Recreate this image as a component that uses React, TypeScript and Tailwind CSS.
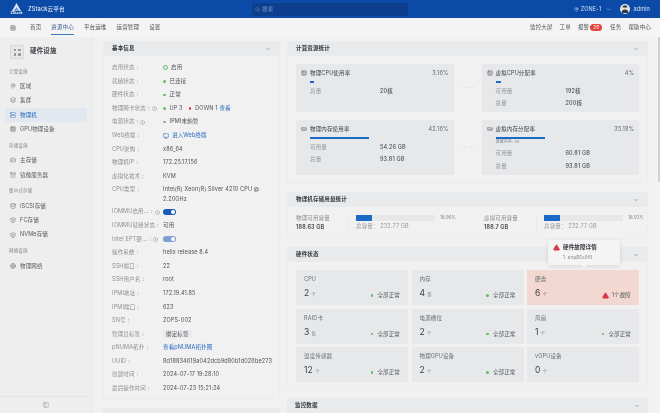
import { AlertTriangle, ChevronDown, Cpu, Grid3x3, HardDrive, Info, MapPin, MemoryStick, Monitor, Search, Server, Layers, Database, PanelLeft, Box, Archive, Globe } from "lucide-react";
import type { ReactNode } from "react";

const font = { fontFamily: '"Inter","Noto Sans CJK SC",sans-serif' };

const groups = [
  { title: "计算设施", items: [["区域", MapPin], ["集群", Layers], ["物理机", Server], ["GPU物理设备", Cpu]] },
  { title: "存储设施", items: [["主存储", HardDrive], ["镜像服务器", Archive]] },
  { title: "集中式存储", items: [["iSCSI存储", Database], ["FC存储", Box], ["NVMe存储", Box]] },
  { title: "网络设施", items: [["物理网络", Globe]] },
] as const;

function Sidebar() {
  return (
    <aside className="flex w-[93px] shrink-0 flex-col border-r border-[#e6e7e7] bg-[#eeeeee]">
      <div className="flex h-[28px] shrink-0 items-center gap-[6px] pl-[10px] pt-[2px]">
        <div className="grid h-[14px] w-[14px] grid-cols-2 gap-[2px] border border-[#d9dadc] bg-[#e6e7e8] p-[2.5px]">
          <span className="bg-[#9a9da1]" /><span className="bg-[#9a9da1]" /><span className="bg-[#9a9da1]" /><span className="bg-[#9a9da1]" />
        </div>
        <span className="text-[6.5px] font-semibold text-[#3a3e44]">硬件设施</span>
      </div>
      <div className="flex-1">
        {groups.map((g) => (
          <div key={g.title} className="mb-[3px]">
            <div className="flex h-[14px] items-center pl-[9px] text-[4.5px] text-[#85888d]">{g.title}</div>
            {g.items.map(([name, Icon]) => (
              <div
                key={name}
                className={`mx-[5px] flex h-[14.3px] items-center gap-[4px] rounded-[2px] pl-[5px] text-[5.5px] ${name === "物理机" ? "bg-[#e1e8f0] text-[#2467bd]" : "text-[#55595f]"}`}
              >
                <Icon size={6} strokeWidth={1.5} />
                <span>{name}</span>
              </div>
            ))}
          </div>
        ))}
      </div>
      <div className="flex h-[17px] shrink-0 items-center justify-center border-t border-[#e4e5e5] text-[#777a7f]">
        <PanelLeft size={6} strokeWidth={1.5} />
      </div>
    </aside>
  );
}

function CardHead({ title }: { title: string }) {
  return (
    <div className="flex h-[15px] shrink-0 items-center justify-between bg-[#e9eaeb] pl-[8px] pr-[8px] text-[5.5px] font-semibold text-[#33373d]">
      <span>{title}</span>
      <ChevronDown size={6} className="text-[#6a6e73]" />
    </div>
  );
}

function Dot({ c }: { c: string }) {
  return <span className={`mr-[4px] inline-block h-[2.5px] w-[2.5px] rounded-full ${c}`} />;
}

function Toggle({ light }: { light?: boolean }) {
  return (
    <span className={`flex h-[6px] w-[13px] items-center justify-end rounded-full pr-[1px] ${light ? "bg-[#7d9fd2]" : "bg-[#1a5bb5]"}`}>
      <span className="h-[4px] w-[4px] rounded-full bg-white" />
    </span>
  );
}

const link = "text-[#2467bd]";

const rows: [string, ReactNode, boolean?][] = [
  ["启用状态", <span className="flex items-center"><span className="mr-[3px] inline-block h-[5px] w-[5px] rounded-full border-[1.5px] border-[#5cb85c]" />启用</span>],
  ["就绪状态", <span className="flex items-center"><Dot c="bg-[#62b866]" />已连接</span>],
  ["硬件状态", <span className="flex items-center"><Dot c="bg-[#62b866]" />正常</span>],
  ["物理网卡状态", <span className="flex items-center"><Dot c="bg-[#62b866]" />UP 3<span className="ml-[6px] flex items-center"><Dot c="bg-[#d9364a]" /></span>DOWN 1<span className={`ml-[2px] ${link}`}>查看</span></span>, true],
  ["电源状态", <span className="flex items-center"><Dot c="bg-[#9a9da1]" />IPMI未纳管</span>, true],
  ["Web终端", <span className={`flex items-center gap-[3px] ${link}`}><Monitor size={6} />进入Web终端</span>],
  ["CPU架构", "x86_64"],
  ["物理机IP", "172.25.17.156"],
  ["虚拟化技术", "KVM"],
  ["CPU类型", <span className="block w-[100px] pt-[2px] leading-[9.5px]">Intel(R) Xeon(R) Silver 4210 CPU @ 2.20GHz</span>],
  ["IOMMU启用...", <span className="flex h-[13.6px] items-center"><Toggle /></span>, true],
  ["IOMMU就绪状态", "可用"],
  ["Intel EPT硬...", <span className="flex h-[13.6px] items-center"><Toggle light /></span>, true],
  ["操作系统", "helix release 8.4"],
  ["SSH端口", "22"],
  ["SSH用户名", "root"],
  ["IPMI地址", "172.19.41.85"],
  ["IPMI端口", "623"],
  ["SN号", "ZOPS-002"],
  ["管理员标签", <span className="bg-[#eaebec] px-[3px] py-[1px]">绑定标签</span>],
  ["pNUMA拓扑", <span className={link}>查看pNUMA拓扑图</span>],
  ["UUID", "8d18834619a042dcb9d80b1d026be273"],
  ["创建时间", "2024-07-17 19:28:10"],
  ["最后操作时间", "2024-07-23 15:21:24"],
];

function BasicInfo() {
  return (
    <div className="flex w-[177px] shrink-0 flex-col gap-[8px]">
      <section className="flex h-[359px] shrink-0 flex-col border-x border-b border-[#ecedEd] bg-[#f1f1f1]">
        <CardHead title="基本信息" />
        <div className="pl-[8px] pt-[5px]">
          {rows.map(([k, v, info]) => (
            <div key={k} className={`flex text-[5.5px] leading-[13.6px] ${k === "CPU类型" ? "h-[22px]" : "h-[13.6px]"}`}>
              <div className="flex h-[13.6px] w-[51px] shrink-0 items-center text-[#8b8e93]">
                <span className="whitespace-nowrap">{k}</span>
                <span className="ml-[2px]">:</span>
                {info ? <Info size={5} className="ml-[2px]" /> : null}
              </div>
              <div className="text-[#4c5056]">{v}</div>
            </div>
          ))}
        </div>
      </section>
      <section className="h-[15px] shrink-0 bg-[#e9eaeb]" />
    </div>
  );
}

function ResourceTile({ icon, title, pct, bar, note, lines }: { icon: ReactNode; title: string; pct: string; bar: number; note?: string; lines: [string, string][] }) {
  return (
    <div className="flex-1 bg-[#e7e8ea] px-[5px] py-[5px]">
      <div className="flex h-[8px] items-center justify-between text-[5.5px] text-[#3a3e44]">
        <span className="flex items-center gap-[3px]"><span className="text-[#5a5e63]">{icon}</span>{title}</span>
        <span className="text-[#63676c]">{pct}</span>
      </div>
      <div className="mt-[4px] pl-[9px]">
        <div className="h-[1.5px] bg-[#1c69c7]" style={{ width: bar }} />
        {note ? <div className="h-[6px] text-[4px] leading-[6px] text-[#7b7e83]">{note}</div> : null}
        <div className={note ? "mt-[2.5px]" : "mt-[2px]"}>
          {lines.map(([a, b]) => (
            <div key={a} className="flex h-[12.5px] items-center text-[5.5px]">
              <span className="w-[70px] text-[#93969a]">{a}</span>
              <span className="font-medium text-[#4c5056]">{b}</span>
            </div>
          ))}
        </div>
      </div>
    </div>
  );
}

function Arrow() {
  return <div className="flex w-[28px] shrink-0 items-center justify-center text-[5px] tracking-[1px] text-[#c2c4c7]">····›</div>;
}

function Compute() {
  const c = <Cpu size={6} strokeWidth={1.5} />;
  const m = <MemoryStick size={6} strokeWidth={1.5} />;
  return (
    <section className="border-x border-b border-[#ecedEd] bg-[#f1f1f1]">
      <CardHead title="计算资源统计" />
      <div className="flex flex-col gap-[8px] px-[8px] pb-[8px] pt-[8px]">
        <div className="flex h-[48px]">
          <ResourceTile icon={c} title="物理CPU使用率" pct="3.16%" bar={4} lines={[["总量", "20核"]]} />
          <Arrow />
          <ResourceTile icon={c} title="虚拟CPU分配率" pct="4%" bar={5} lines={[["可用量", "192核"], ["总量", "200核"]]} />
        </div>
        <div className="flex h-[55px]">
          <ResourceTile icon={m} title="物理内存使用率" pct="42.16%" bar={59} lines={[["可用量", "54.26 GB"], ["总量", "93.81 GB"]]} />
          <Arrow />
          <ResourceTile icon={m} title="虚拟内存分配率" pct="35.18%" bar={49} note="保留内存: 10" lines={[["可用量", "60.81 GB"], ["总量", "93.81 GB"]]} />
        </div>
      </div>
    </section>
  );
}

function StorageCell({ title, value, pct, wide }: { title: string; value: string; pct: string; wide?: boolean }) {
  return (
    <div className={`flex items-center ${wide ? "w-[188px] shrink-0" : "flex-1"}`}>
      <div className="w-[52px] shrink-0 text-[5.5px] leading-[9px]">
        <div className="text-[#8b8e93]">{title}</div>
        <div className="font-semibold text-[#3a3e44]">{value}</div>
      </div>
      <div className="border-l border-[#e8e9e9] pl-[7px]">
        <div className="flex items-center gap-[5px]">
          <div className="h-[5.5px] w-[79px] bg-[#e6e7e8]"><div className="h-full w-[16px] bg-[#1c69c7]" /></div>
          <span className="text-[4.3px] text-[#7b7e83]">{pct}</span>
        </div>
        <div className="mt-[1px] text-[5.5px] leading-[8px] text-[#969a9e]">总容量： 232.77 GB</div>
      </div>
    </div>
  );
}

function Storage() {
  return (
    <section className="border-x border-b border-[#ecedEd] bg-[#f1f1f1]">
      <CardHead title="物理机存储用量统计" />
      <div className="flex h-[31px] items-center pl-[8px]">
        <StorageCell wide title="物理可用容量" value="188.63 GB" pct="18.96%" />
        <StorageCell title="虚拟可用容量" value="188.7 GB" pct="18.93%" />
      </div>
    </section>
  );
}

const hw: [string, string, string, number][] = [
  ["CPU", "2", "个", 1], ["内存", "4", "条", 1], ["硬盘", "6", "个", 2],
  ["RAID卡", "3", "张", 1], ["电源槽位", "2", "个", 1], ["风扇", "1", "个", 1],
  ["温度传感器", "12", "个", 1], ["物理GPU设备", "2", "个", 1], ["vGPU设备", "0", "个", 0],
];

function Hardware() {
  return (
    <section className="relative border-x border-b border-[#ecedEd] bg-[#f1f1f1]">
      <CardHead title="硬件状态" />
      <div className="grid grid-cols-3 gap-[3.5px] px-[8px] pb-[7px] pt-[8px]">
        {hw.map(([t, n, u, s]) => (
          <div key={t} className={`flex h-[35px] flex-col justify-between px-[8px] pb-[5px] pt-[5px] ${s === 2 ? "bg-[#f2d8d0]" : "bg-[#e7e8ea]"}`}>
            <div className="text-[5.5px] leading-[8px] text-[#6a6e73]">{t}</div>
            <div className="flex items-end justify-between">
              <span className="text-[8.5px] leading-[10px] text-[#3a3e44]">{n}<span className="ml-[2px] text-[4.5px] text-[#7b7e83]">{u}</span></span>
              {s === 1 ? <span className="flex items-center text-[5.5px] leading-[9px] text-[#55595f]"><Dot c="bg-[#62b866]" />全部正常</span> : null}
              {s === 2 ? <span className="flex items-center gap-[3px] text-[5.5px] leading-[9px] text-[#55595f]"><AlertTriangle size={7} fill="#d9364a" stroke="#d9364a" />1个故障</span> : null}
            </div>
          </div>
        ))}
      </div>
      <div className="absolute left-[260px] top-[-7px] z-10 h-[25px] w-[72px] rounded-[2px] bg-[#f4f4f5] pl-[5px] pt-[3px] shadow-[0_1px_4px_rgba(0,0,0,0.12)]">
        <div className="flex items-center gap-[3px] text-[5.5px] font-semibold leading-[9px] text-[#33373d]"><AlertTriangle size={7} fill="#d9364a" stroke="#d9364a" />硬件故障详情</div>
        <div className="mt-[2px] pl-[10px] text-[4.5px] leading-[7px] text-[#7b7e83]">1. enp85s0f0</div>
        <span className="absolute bottom-[-2px] left-[34px] h-[5px] w-[5px] rotate-45 bg-[#f4f4f5]" />
      </div>
    </section>
  );
}

function Header() {
  return (
    <header className="flex h-[18px] shrink-0 items-center bg-[#0b4aa6] text-white">
      <div className="flex w-[252px] shrink-0 items-center pl-[9px]">
        <div className="flex w-[15px] flex-col items-center">
          <svg width="9" height="8" viewBox="0 0 9 8"><path d="M4.5 0 L9 8 H6.6 L4.5 4.2 L2.4 8 H0 Z" fill="#dce8f8" /><path d="M4.5 5 L6 8 H3 Z" fill="#8fb4e6" /></svg>
          <span className="text-[3.6px] font-semibold leading-[5px] tracking-normal">ZStack</span>
        </div>
        <span className="ml-[4px] text-[5.6px] font-medium text-[#e3ecf9]">ZStack云平台</span>
      </div>
      <div className="flex h-[13px] w-[156px] items-center gap-[2px] rounded-[1px] bg-[#0d3f8e] pl-[3px] text-[5.5px] text-[#7f9cc9]">
        <Search size={5} />搜索
      </div>
      <div className="ml-auto flex items-center pr-[10px] text-[5.5px] text-[#d5e2f5]">
        <MapPin size={5} className="mr-[2px]" />ZONE-1
        <ChevronDown size={5} className="ml-[5px]" />
        <svg width="10" height="10" viewBox="0 0 10 10" className="ml-[9px]">
          <circle cx="5" cy="5" r="5" fill="#e3e9f2" />
          <circle cx="5" cy="4" r="2.4" fill="#f0d9c4" />
          <path d="M2.6 3.6 A2.4 2.4 0 0 1 7.4 3.6 Z" fill="#2f3a4a" />
          <path d="M1.6 9 A3.4 3.4 0 0 1 8.4 9 Z" fill="#2f3a4a" />
        </svg>
        <span className="ml-[3px]">admin</span>
      </div>
    </header>
  );
}

function Nav() {
  const left = ["首页", "资源中心", "平台运维", "运营管理", "设置"];
  return (
    <nav className="flex h-[19px] shrink-0 items-center bg-[#f4f4f4] text-[5.5px] text-[#4c5056]">
      <Grid3x3 size={6} className="ml-[10px] mr-[14px] text-[#777a7f]" />
      <div className="flex h-full gap-[10px]">
        {left.map((t) => (
          <span key={t} className={`relative flex items-center ${t === "资源中心" ? "text-[#3f6492]" : ""}`}>
            {t}
            {t === "资源中心" ? <span className="absolute inset-x-0 bottom-[2px] h-[1px] bg-[#3a78c4]" /> : null}
          </span>
        ))}
      </div>
      <div className="ml-auto flex items-center gap-[7px] pr-[9px]">
        <span>监控大屏</span>
        <span>工单</span>
        <span className="flex items-center gap-[1px]">报警<span className="rounded-full bg-[#e0433c] px-[3px] text-[4.5px] leading-[7px] text-white">29</span></span>
        <span className="ml-[1px]">任务</span>
        <span>帮助中心</span>
      </div>
    </nav>
  );
}

export default function App() {
  return (
    <div className="flex h-[413px] w-[660px] flex-col overflow-hidden bg-[#f1f1f1] tracking-[0.15px] blur-[0.3px]" style={font}>
      <Header />
      <Nav />
      <div className="flex min-h-0 flex-1">
        <Sidebar />
        <main className="flex min-w-0 flex-1 gap-[7px] overflow-hidden pl-[10px] pt-[4px]">
          <BasicInfo />
          <div className="flex w-[361px] shrink-0 flex-col gap-[8px]">
            <Compute />
            <Storage />
            <Hardware />
            <section className="shrink-0"><CardHead title="监控数据" /></section>
          </div>
          <div className="-mt-[4px] flex flex-1 justify-end bg-[#f3f3f3]"><div className="h-[145px] w-[2.5px] bg-[#d0d1d3]" /></div>
        </main>
      </div>
    </div>
  );
}
